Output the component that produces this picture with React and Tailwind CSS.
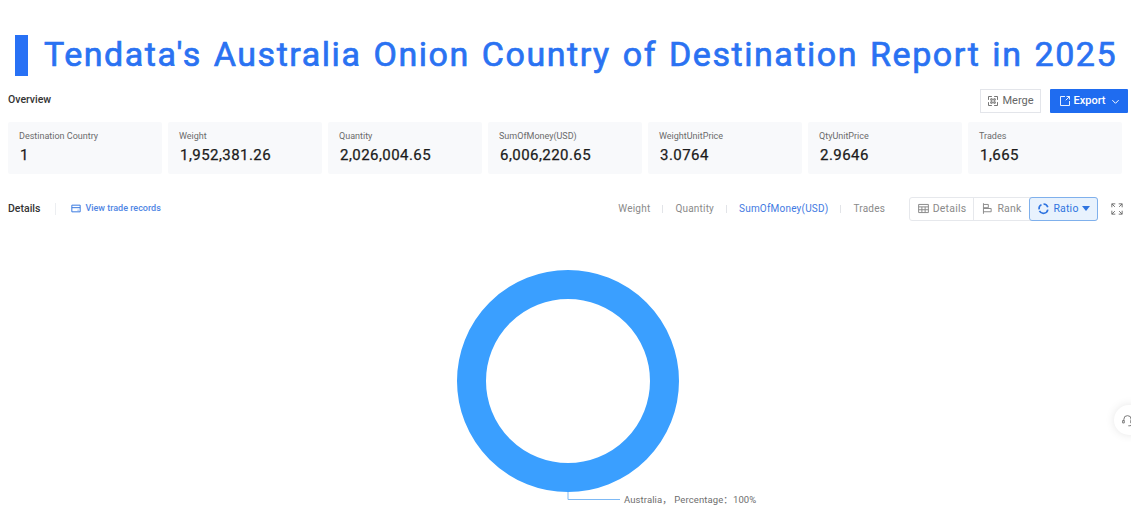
import React from 'react'

const stats = [
  { label: 'Destination Country', value: '1' },
  { label: 'Weight', value: '1,952,381.26' },
  { label: 'Quantity', value: '2,026,004.65' },
  { label: 'SumOfMoney(USD)', value: '6,006,220.65' },
  { label: 'WeightUnitPrice', value: '3.0764' },
  { label: 'QtyUnitPrice', value: '2.9646' },
  { label: 'Trades', value: '1,665' }
]

const metrics = ['Weight', 'Quantity', 'SumOfMoney(USD)', 'Trades']

function Icon({ className = 'h-3.5 w-3.5', children }) {
  return (
    <svg viewBox="0 0 16 16" fill="none" stroke="currentColor" strokeWidth="1.2" className={className}>
      {children}
    </svg>
  )
}

export default function App() {
  return (
    <div className="relative h-[510px] w-[1131px] overflow-hidden bg-white font-['Roboto',sans-serif]">
      <div className="flex h-[76px] items-end pl-[15px]">
        <div className="h-[41px] w-[13px] shrink-0 bg-[#2871f5]" />
        <h1 className="ml-4 whitespace-nowrap pb-[2px] text-[34px] leading-[40px] font-normal tracking-[1.55px] [word-spacing:2px] text-[#2a72f2] [-webkit-text-stroke:0.7px_#2a72f2]">
          Tendata's Australia Onion Country of Destination Report in 2025
        </h1>
      </div>

      <div className="mt-[13px] flex h-[24px] items-start justify-between pr-[3px] pl-2">
        <div className="text-[10.5px] leading-[21px] font-medium text-[#333]">Overview</div>
        <div className="flex gap-[9px]">
          <button className="flex h-[24px] w-[61px] items-center justify-center gap-[3px] border border-[#e3e5ea] text-[11px] text-[#666]">
            <Icon className="h-[12px] w-[12px]">
              <path d="M6.500 2H2v4.500M9.500 2H14v4.500M6.500 14H2V9.500M9.500 14H14V9.500M5 5h2v2H5zM9 5h2v2H9zM5 9h2v2H5zM9 9h2v2H9z" />
            </Icon>
            Merge
          </button>
          <button className="flex h-[24px] w-[78px] items-center justify-center gap-[3px] rounded-[1px] bg-[#1f6cf0] text-[11px] font-medium text-white">
            <Icon className="h-[12px] w-[12px]">
              <path d="M8 2H2v12h12V8M9 7l5-5M10 2h4v4" />
            </Icon>
            Export
            <svg viewBox="0 0 10 10" fill="none" stroke="currentColor" strokeWidth="1.1" className="ml-[2px] h-[9px] w-[9px]">
              <path d="M1.500 3.500L5 7l3.500-3.500" />
            </svg>
          </button>
        </div>
      </div>

      <div className="mt-[9px] flex gap-[6px] pl-2">
        {stats.map(stat => (
          <div key={stat.label} className="h-[52px] w-[154px] rounded-[2px] bg-[#f8f9fb] pt-[8px] pl-[11px]">
            <div className="text-[9px] leading-[13px] text-[#6b6b6b]">{stat.label}</div>
            <div className="mt-[2px] pl-[1px] text-[15px] leading-[20px] font-normal tracking-[0.45px] text-[#1c1c1c] [-webkit-text-stroke:0.25px_#1c1c1c]">{stat.value}</div>
          </div>
        ))}
      </div>

      <div className="mt-[22px] flex h-[25px] items-center pr-[8px] pl-2">
        <span className="text-[10.5px] font-medium text-[#333]">Details</span>
        <span className="mx-[15px] h-[12px] w-px bg-[#eceef1]" />
        <svg viewBox="0 0 12 10" fill="none" stroke="#3b7be0" strokeWidth="1.2" className="h-[9px] w-[10px]">
          <path d="M1 1h10v8H1zM1 4h10M8 7h1" />
        </svg>
        <span className="ml-[4px] text-[9px] font-medium text-[#4f86e4]">View trade records</span>

        <div className="ml-auto flex items-center text-[10px] tracking-[0.2px] text-[#8a8a8a]">
          {metrics.map((metric, i) => (
            <React.Fragment key={metric}>
              {i > 0 && <span className="mx-[12px] h-[8px] w-px bg-[#e2e4e8]" />}
              <span className={metric === 'SumOfMoney(USD)' ? 'text-[#3f7ae2]' : ''}>{metric}</span>
            </React.Fragment>
          ))}
        </div>

        <div className="ml-[24px] flex h-[24px] rounded-[3px] border border-[#e6e8ec] text-[10.5px] tracking-[0.2px] text-[#8a8a8a]">
          <div className="flex w-[64px] items-center justify-center gap-[3px] border-r border-[#e6e8ec]">
            <Icon className="h-[13px] w-[13px]">
              <path d="M2 3h12v10H2zM2 6h12M2 9.500h12M6 6v7M10 6v7" />
            </Icon>
            Details
          </div>
          <div className="flex w-[55px] items-center justify-center gap-[3px]">
            <Icon className="h-[13px] w-[13px]">
              <path d="M3 1.500v13M3 3h6v4H3M3 8h9.500v4H3" />
            </Icon>
            Rank
          </div>
          <div className="-my-px -mr-px flex w-[69px] items-center justify-center gap-[3px] rounded-[3px] border border-[#7fb0ec] bg-[#e8f2fd] text-[#2f74e0]">
            <svg viewBox="0 0 16 16" fill="none" stroke="currentColor" strokeWidth="2" className="h-[13px] w-[13px]">
              <path d="M8 2.500a5.500 5.500 0 0 1 5.300 4M13.300 9.500A5.500 5.500 0 0 1 3 11M2.600 9A5.500 5.500 0 0 1 5.500 3.200" />
            </svg>
            Ratio
            <svg viewBox="0 0 10 6" fill="currentColor" className="h-[5px] w-[8px]">
              <path d="M0 0h10L5 6z" />
            </svg>
          </div>
        </div>

        <svg viewBox="0 0 14 14" fill="none" stroke="#6b6b6b" strokeWidth="1.1" className="ml-[13px] h-[12px] w-[12px]">
          <path d="M1 5V1h4M9 1h4v4M1 9v4h4M13 9v4H9M1 1l3.500 3.500M13 1L9.500 4.500M1 13l3.500-3.500M13 13L9.500 9.500" />
        </svg>
      </div>

      <div className="flex justify-center pt-[35px] pl-[5px]">
        <svg width="330" height="250" viewBox="0 0 330 250" className="overflow-visible">
          <circle cx="165" cy="125" r="96.500" fill="none" stroke="#3a9fff" strokeWidth="29" />
          <path d="M165 236v7.500h52" fill="none" stroke="#7db9f5" strokeWidth="1" />
          <text x="221" y="247" fontFamily="Roboto, 'Noto Sans CJK SC', sans-serif" fontSize="9.500" letterSpacing="0.1" fill="#6e6e6e">
            Australia， Percentage：100%
          </text>
        </svg>
      </div>

      <div className="absolute top-[405px] left-[1114px] flex h-[30px] w-[30px] items-center justify-start rounded-full bg-white pl-[7px] shadow-[0_0_10px_rgba(0,0,0,0.1)]">
        <svg viewBox="0 0 16 16" fill="none" stroke="#777" strokeWidth="1.2" className="h-[13px] w-[13px]">
          <path d="M3.500 8V6.500a4.500 4.500 0 0 1 9 0V8M2 8h2v3H2zM12 8h2v3h-2zM13 11v1.500a2 2 0 0 1-2 2H9" />
        </svg>
      </div>
    </div>
  )
}
